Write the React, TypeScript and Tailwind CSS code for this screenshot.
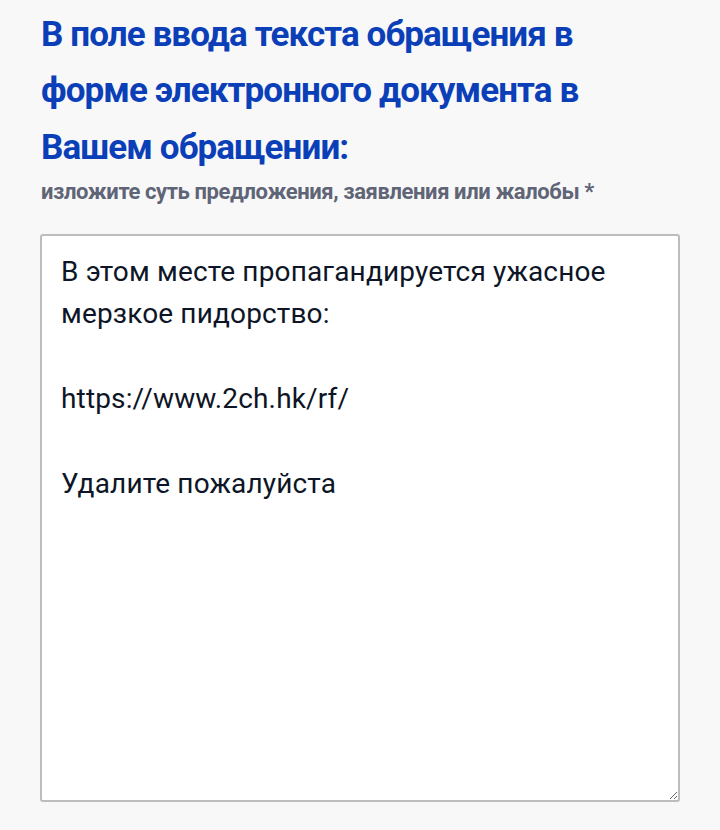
import React from "react";

export default function App() {
  const text =
    "В этом месте пропагандируется ужасное мерзкое пидорство:\n\nhttps://www.2ch.hk/rf/\n\nУдалите пожалуйста";
  return (
    <div className="min-h-[830px] w-[720px] bg-[#f8f8f8] px-[40px] pt-[6.5px] font-['Roboto',sans-serif]">
      <h2 className="w-[560px] pl-[1px] text-[35px] leading-[56.65px] font-bold tracking-[-0.9px] text-[#0b3fb8]">
        В поле ввода текста обращения в форме электронного документа в Вашем обращении:
      </h2>
      <p className="mt-[1.5px] pl-[1px] text-[22px] leading-[28px] font-bold tracking-[-0.4px] text-[#5f6577]">
        изложите суть предложения, заявления или жалобы *
      </p>
      <textarea
        defaultValue={text}
        className="mt-[28px] block h-[568px] w-[640px] resize-y rounded-[3px] border-2 border-[#bdbdbd] bg-white px-[19px] pt-[15px] font-['Roboto',sans-serif] text-[28px] leading-[42.5px] tracking-[0.15px] text-[#0d1526] outline-none"
      />
    </div>
  );
}
